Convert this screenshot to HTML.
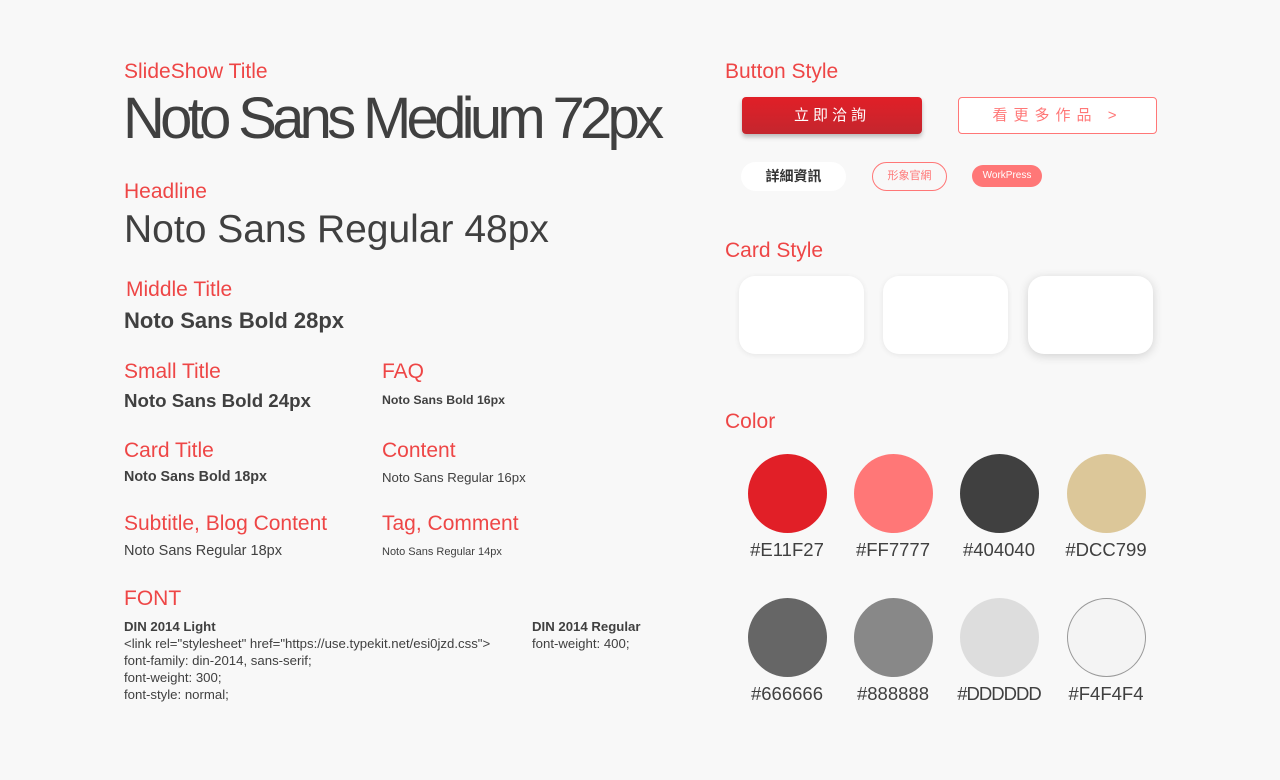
<!DOCTYPE html><html><head><meta charset="utf-8"><style>
body{margin:0;width:1280px;height:780px;background:#f8f8f8;position:relative;overflow:hidden;font-family:"Liberation Sans","Noto Sans CJK TC",sans-serif;color:#404040}
div,span{position:absolute;white-space:nowrap}
.r{color:#ee4646;font-size:21px;line-height:24px}
.c{width:79px;height:79px;border-radius:50%}
.l{font-size:18.5px;line-height:22px;width:120px;text-align:center}
.card{width:125px;height:78px;background:#fff;border-radius:16px;box-shadow:0 1px 6px rgba(0,0,0,.08)}
</style></head><body>
<div class="r" style="left:124px;top:60px">SlideShow Title</div>
<div style="left:123px;top:86px;font-size:58px;line-height:66px;letter-spacing:-4.7px;color:#404040">Noto Sans Medium 72px</div>
<div class="r" style="left:124px;top:180px">Headline</div>
<div style="left:124px;top:207px;font-size:39px;line-height:46px">Noto Sans Regular 48px</div>
<div class="r" style="left:126px;top:278px">Middle Title</div>
<div style="left:124px;top:308px;font-size:22px;line-height:25px;font-weight:bold">Noto Sans Bold 28px</div>
<div class="r" style="left:124px;top:360px">Small Title</div>
<div style="left:124px;top:390px;font-size:18.7px;line-height:22px;font-weight:bold">Noto Sans Bold 24px</div>
<div class="r" style="left:382px;top:360px">FAQ</div>
<div style="left:382px;top:392px;font-size:12.3px;line-height:16px;font-weight:bold">Noto Sans Bold 16px</div>
<div class="r" style="left:124px;top:439px">Card Title</div>
<div style="left:124px;top:469px;font-size:14.3px;line-height:17px;font-weight:bold">Noto Sans Bold 18px</div>
<div class="r" style="left:382px;top:439px">Content</div>
<div style="left:382px;top:470px;font-size:13.2px;line-height:16px">Noto Sans Regular 16px</div>
<div class="r" style="left:124px;top:512px">Subtitle, Blog Content</div>
<div style="left:124px;top:543px;font-size:14.5px;line-height:17px">Noto Sans Regular 18px</div>
<div class="r" style="left:382px;top:512px">Tag, Comment</div>
<div style="left:382px;top:545px;font-size:11px;line-height:14px">Noto Sans Regular 14px</div>
<div class="r" style="left:124px;top:587px">FONT</div>
<div style="left:124px;top:618px;font-size:13.2px;line-height:17px"><b>DIN 2014 Light</b><br>&lt;link rel="stylesheet" href="https://use.typekit.net/esi0jzd.css"&gt;<br>font-family: din-2014, sans-serif;<br>font-weight: 300;<br>font-style: normal;</div>
<div style="left:532px;top:618px;font-size:13.2px;line-height:17px"><b>DIN 2014 Regular</b><br>font-weight: 400;</div>

<div class="r" style="left:725px;top:60px">Button Style</div>
<div style="left:742px;top:97px;width:180px;height:37px;border-radius:4px;background:linear-gradient(#e11f27,#c4262e);box-shadow:0 3px 5px rgba(0,0,0,.25);color:#fff;font-size:15px;line-height:37px;text-align:center;letter-spacing:4px">立即洽詢</div>
<div style="left:958px;top:97px;width:197px;height:35px;border:1px solid #ff7777;border-radius:4px;background:#fff;color:#ff7777;font-size:15px;line-height:35px;text-align:center;letter-spacing:6px">看更多作品 &gt;</div>
<div style="left:741px;top:162px;width:105px;height:29px;border-radius:15px;background:#fff;font-size:14px;line-height:29px;text-align:center;font-weight:bold;color:#333">詳細資訊</div>
<div style="left:872px;top:162px;width:73px;height:27px;border:1px solid #ff7777;border-radius:15px;font-size:11px;line-height:27px;text-align:center;color:#ff7777">形象官網</div>
<div style="left:972px;top:165px;width:70px;height:22px;border-radius:11px;background:#ff7777;font-size:10px;line-height:22px;text-align:center;color:#fff">WorkPress</div>

<div class="r" style="left:725px;top:239px">Card Style</div>
<div class="card" style="left:739px;top:276px"></div>
<div class="card" style="left:883px;top:276px"></div>
<div class="card" style="left:1028px;top:276px;box-shadow:0 2px 10px rgba(0,0,0,.16)"></div>

<div class="r" style="left:725px;top:410px">Color</div>
<div class="c" style="left:748px;top:454px;background:#e11f27"></div>
<div class="c" style="left:854px;top:454px;background:#ff7777"></div>
<div class="c" style="left:960px;top:454px;background:#404040"></div>
<div class="c" style="left:1067px;top:454px;background:#dcc799"></div>
<div class="l" style="left:727px;top:539px">#E11F27</div>
<div class="l" style="left:833px;top:539px">#FF7777</div>
<div class="l" style="left:939px;top:539px">#404040</div>
<div class="l" style="left:1046px;top:539px">#DCC799</div>
<div class="c" style="left:748px;top:598px;background:#666"></div>
<div class="c" style="left:854px;top:598px;background:#888"></div>
<div class="c" style="left:960px;top:598px;background:#ddd"></div>
<div class="c" style="left:1067px;top:598px;width:77px;height:77px;background:#f4f4f4;border:1px solid #999"></div>
<div class="l" style="left:727px;top:683px">#666666</div>
<div class="l" style="left:833px;top:683px">#888888</div>
<div class="l" style="left:939px;top:683px;letter-spacing:-1px">#DDDDDD</div>
<div class="l" style="left:1046px;top:683px">#F4F4F4</div>
</body></html>
